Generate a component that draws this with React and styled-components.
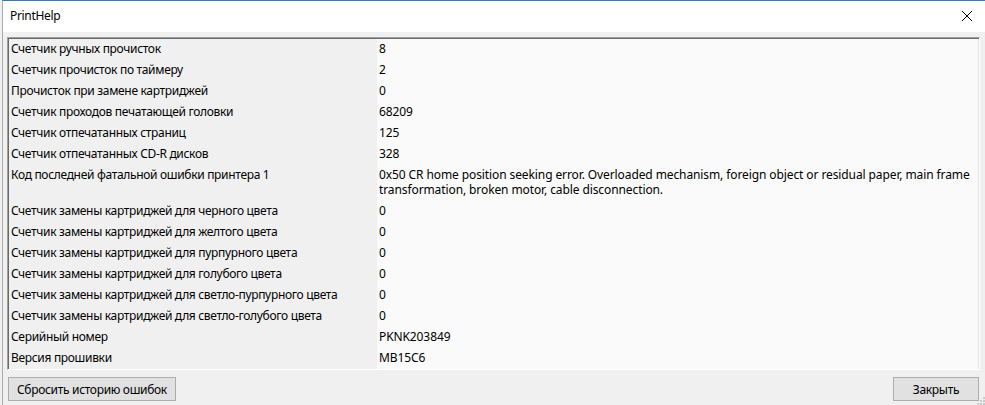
import React from "react";
import styled, { createGlobalStyle } from "styled-components";

const GlobalStyle = createGlobalStyle`
  html, body {
    margin: 0;
    padding: 0;
    background: #f0f0f0;
  }
  body {
    font-family: "Segoe UI", "Noto Sans", "Open Sans", sans-serif;
    font-size: 12px;
    letter-spacing: -0.32px;
    color: #000;
  }
`;

const Window = styled.div`
  width: 985px;
  height: 405px;
  box-sizing: border-box;
  border-top: 1px solid #2b79d0;
  border-left: 1px solid #aaaaaa;
  margin-left: 2px;
  background: #f0f0f0;
  display: flex;
  flex-direction: column;
  overflow: hidden;
`;

const TitleBar = styled.div`
  height: 31px;
  background: #ffffff;
  display: flex;
  align-items: center;
  justify-content: space-between;
  padding: 0 8px 0 7px;
  flex-shrink: 0;
`;

const Title = styled.span`
  font-size: 12px;
  color: #000;
  margin-top: -3px;
`;

const CloseButton = styled.button`
  width: 24px;
  height: 24px;
  border: none;
  background: transparent;
  padding: 0;
  display: flex;
  align-items: center;
  justify-content: center;
  margin-top: -2px;
`;

const Body = styled.div`
  flex: 1;
  display: flex;
  flex-direction: column;
  padding: 5px 4px 0 4px;
`;

const PropertyGrid = styled.div`
  display: grid;
  grid-template-columns: 368px 1fr;
  box-sizing: border-box;
  width: 973px;
  border-top: 1px solid #a0a0a0;
  border-left: 1px solid #a0a0a0;
  border-right: 1px solid #ffffff;
  border-bottom: 1px solid #ffffff;
  box-shadow: inset 1px 1px 0 #696969, inset -1px -1px 0 #e3e3e3;
  padding: 1px 1px 0 1px;
  background: #fafafa;
`;

const Cell = styled.div`
  padding: 2px 2px 4px 2px;
  line-height: 15px;
  min-height: 15px;
  background: ${(p) => (p.$label ? "#f0f0f0" : "#fafafa")};
  white-space: ${(p) => (p.$label ? "nowrap" : "normal")};
  letter-spacing: ${(p) => (p.$label ? "-0.32px" : "-0.1px")};
`;

const Footer = styled.div`
  display: flex;
  justify-content: space-between;
  align-items: center;
  padding: 7px 1px 0 1px;
  width: 973px;
  box-sizing: border-box;
`;

const Button = styled.button`
  height: 24px;
  box-sizing: border-box;
  border: 1px solid #adadad;
  background: #e1e1e1;
  font-family: inherit;
  font-size: 12px;
  letter-spacing: inherit;
  color: #000;
  padding: 0 ${(p) => p.$pad}px;
  min-width: ${(p) => p.$min || 0}px;
  margin: 0;
`;

const Grip = styled.svg`
  position: absolute;
  right: 0;
  bottom: 0;
`;

const rows = [
  ["Счетчик ручных прочисток", "8"],
  ["Счетчик прочисток по таймеру", "2"],
  ["Прочисток при замене картриджей", "0"],
  ["Счетчик проходов печатающей головки", "68209"],
  ["Счетчик отпечатанных страниц", "125"],
  ["Счетчик отпечатанных CD-R дисков", "328"],
  [
    "Код последней фатальной ошибки принтера 1",
    "0x50 CR home position seeking error. Overloaded mechanism, foreign object or residual paper, main frame transformation, broken motor, cable disconnection.",
  ],
  ["Счетчик замены картриджей для черного цвета", "0"],
  ["Счетчик замены картриджей для желтого цвета", "0"],
  ["Счетчик замены картриджей для пурпурного цвета", "0"],
  ["Счетчик замены картриджей для голубого цвета", "0"],
  ["Счетчик замены картриджей для светло-пурпурного цвета", "0"],
  ["Счетчик замены картриджей для светло-голубого цвета", "0"],
  ["Серийный номер", "PKNK203849"],
  ["Версия прошивки", "MB15C6"],
];

export default function App() {
  return (
    <>
      <GlobalStyle />
      <Window>
        <TitleBar>
          <Title>PrintHelp</Title>
          <CloseButton aria-label="Закрыть">
            <svg width="12" height="12" viewBox="0 0 12 12">
              <path d="M1 1 L11 11 M11 1 L1 11" stroke="#000" strokeWidth="1" fill="none" />
            </svg>
          </CloseButton>
        </TitleBar>
        <Body>
          <PropertyGrid>
            {rows.map(([label, value]) => (
              <React.Fragment key={label}>
                <Cell $label>{label}</Cell>
                <Cell>{value}</Cell>
              </React.Fragment>
            ))}
          </PropertyGrid>
          <Footer>
            <Button $pad={8}>Сбросить историю ошибок</Button>
            <Button $pad={8} $min={86}>Закрыть</Button>
          </Footer>
        </Body>
        <Grip width="10" height="10" viewBox="0 0 10 10">
          {[
            [8, 2], [8, 5], [5, 5], [8, 8], [5, 8], [2, 8],
          ].map(([x, y]) => (
            <rect key={`${x}-${y}`} x={x} y={y} width="2" height="2" fill="#c8c8c8" />
          ))}
        </Grip>
      </Window>
    </>
  );
}
